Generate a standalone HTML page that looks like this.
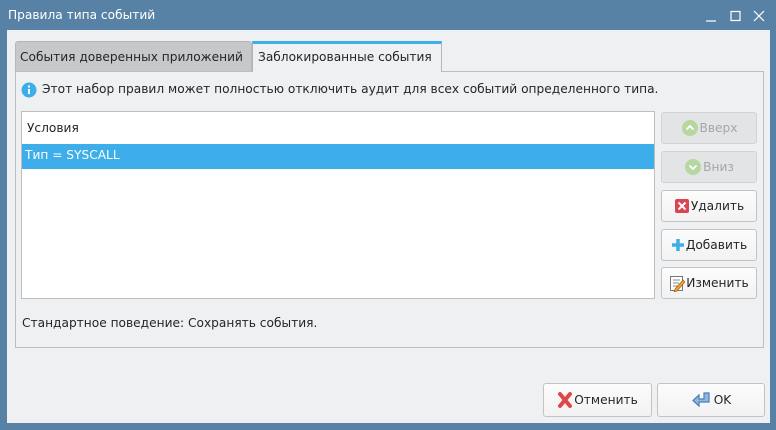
<!DOCTYPE html>
<html><head><meta charset="utf-8"><style>
*{box-sizing:border-box;margin:0;padding:0}
body{width:776px;height:430px;background:#5882a5;font-family:"DejaVu Sans","Liberation Sans",sans-serif;font-size:12.2px;color:#232627;position:relative;overflow:hidden}
.a{position:absolute}
.title{left:8px;top:8px;color:#fff}
.win{left:7px;top:30px;width:763px;height:393px;background:#eff0f1}
.tab1{left:15px;top:41px;width:237px;height:30px;background:#c7c8c9;border:1px solid #b5b6b7;border-bottom:none;border-radius:3px 3px 0 0;padding:8px 0 0 4px}
.tab2{left:252px;top:41px;width:190px;height:31px;background:#eff0f1;border:1px solid #b5b6b7;border-top:3px solid #3daee9;border-bottom:none;padding:6px 0 0 5px;z-index:2}
.panel{left:15px;top:71px;width:749px;height:277px;border:1px solid #bcbebf}
.list{left:21px;top:111px;width:634px;height:188px;background:#fff;border:1px solid #bcbebf}
.btn{width:96px;height:32px;border:1px solid #c2c3c4;border-radius:3px;background:linear-gradient(#fcfcfc,#f2f2f2);display:flex;align-items:center;justify-content:center;gap:1px}
.dis{background:#e3e4e5;color:#a4a6a8;border-color:#d2d3d4}
</style></head><body>
<div class="a title">Правила типа событий</div>
<svg class="a" style="left:700px;top:8px" width="70" height="16"><path d="M6 13h10" stroke="#fff" stroke-width="1.2"/><rect x="31" y="3.5" width="9" height="9" fill="none" stroke="#fff" stroke-width="1.2"/><path d="M54 3l10 10M64 3l-10 10" stroke="#fff" stroke-width="1.2"/></svg>
<div class="a win"></div>
<div class="a panel"></div>
<div class="a tab1">События доверенных приложений</div>
<div class="a tab2">Заблокированные события</div>
<svg class="a" style="left:21px;top:82px" width="16" height="16"><circle cx="8" cy="8" r="7.5" fill="#3daee9"/><rect x="7" y="7" width="2" height="5" fill="#fff"/><rect x="7" y="3.5" width="2" height="2" fill="#fff"/></svg>
<div class="a" style="left:42px;top:82px">Этот набор правил может полностью отключить аудит для всех событий определенного типа.</div>
<div class="a list">
<div style="height:32px;padding:9px 0 0 5px">Условия</div>
<div style="height:25px;background:#3daee9;color:#fff;padding:4px 0 0 3px">Тип = SYSCALL</div>
</div>
<div class="a btn dis" style="left:661px;top:112px"><svg width="18" height="18"><circle cx="9" cy="9" r="8" fill="#b6d7a0"/><path d="M5.5 10.5l3.5-3.5 3.5 3.5" stroke="#fff" stroke-width="1.8" fill="none"/></svg>Вверх</div>
<div class="a btn dis" style="left:661px;top:151px"><svg width="18" height="18"><circle cx="9" cy="9" r="8" fill="#b6d7a0"/><path d="M5.5 7.5l3.5 3.5 3.5-3.5" stroke="#fff" stroke-width="1.8" fill="none"/></svg>Вниз</div>
<div class="a btn" style="left:661px;top:190px"><svg width="16" height="16"><rect x="1" y="1" width="14" height="14" rx="2" fill="#da4453"/><path d="M4.5 4.5l7 7M11.5 4.5l-7 7" stroke="#fff" stroke-width="2"/></svg>Удалить</div>
<div class="a btn" style="left:661px;top:229px"><svg width="14" height="14"><path d="M7 1v12M1 7h12" stroke="#3daee9" stroke-width="3.5"/></svg>Добавить</div>
<div class="a btn" style="left:661px;top:267px"><svg width="16" height="17"><rect x="1.5" y="1.5" width="12" height="14" fill="#fff" stroke="#777"/><path d="M4 5h7M4 8h6M4 11h5" stroke="#888"/><path d="M6 14l8-9 2 2-8 9-3 1z" fill="#f0a030" stroke="#a06010" stroke-width=".7"/></svg>Изменить</div>
<div class="a" style="left:22px;top:316px">Стандартное поведение: Сохранять события.</div>
<div class="a btn" style="left:543px;top:383px;width:109px;height:34px"><svg width="16" height="18"><path d="M3 3l10 12M13 3L3 15" stroke="#e04848" stroke-width="4" stroke-linecap="round"/></svg>Отменить</div>
<div class="a btn" style="left:657px;top:383px;width:108px;height:34px"><svg width="22" height="18"><path d="M13 2h5v9H8v4L2 9.5 8 4v4h5z" fill="#8fb8e0" stroke="#4a7fb5" stroke-width="1.2"/></svg>OK</div>
</body></html>
